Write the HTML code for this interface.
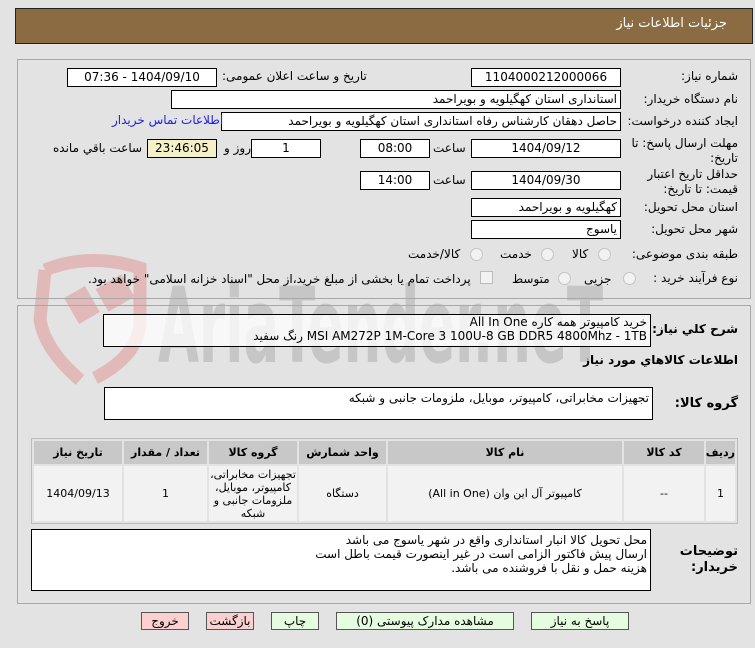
<!DOCTYPE html>
<html><head><meta charset="utf-8"><style>
*{margin:0;padding:0;box-sizing:border-box}
body{width:755px;height:648px;background:#e3e3e3;font-family:"DejaVu Sans","Liberation Sans",sans-serif;font-size:12px;color:#000;position:relative;overflow:hidden}
.a{position:absolute;white-space:nowrap}
.hdr{left:15px;top:8px;width:738px;height:36px;background:#8b6b42;border:1px solid #222}
.panel{position:absolute;left:17px;width:734px;border:1px solid #a8a8a8;background:#e3e3e3}
.box{position:absolute;background:#fff;border:1px solid #000;height:19px;font-size:12px;line-height:17px;padding:0 3px;direction:rtl;white-space:nowrap;overflow:hidden}
.c{text-align:center}
.lb{position:absolute;right:17px;direction:rtl;text-align:right;font-size:12px;white-space:nowrap}
.r{position:absolute;width:13px;height:13px;border-radius:50%;border:1px solid #c4c4c4;background:#f2f2f2}
.btn{position:absolute;top:612px;height:18px;border:1px solid #555;font-size:12px;line-height:16px;text-align:center;direction:rtl}
table{position:absolute;left:31px;top:438px;width:707px;border:1px solid #bbb;background:#e3e3e3;border-spacing:2px;direction:rtl;table-layout:fixed}
th{background:#c8c8c8;height:23px;font-size:11px;font-weight:bold;white-space:nowrap;overflow:hidden}
td{background:#f2f2f2;height:55px;text-align:center;font-size:11px;line-height:13px}
</style></head><body>
<svg class="a" style="left:0;top:250px" width="640" height="150">
<path d="M45 20 Q90 2 140 18 L140 70 Q140 105 95 128" fill="none" stroke="#e2b9b9" stroke-width="13"/>
<path d="M45 20 L40 70 Q45 100 80 130" fill="none" stroke="#e2b9b9" stroke-width="13"/>
<rect x="70" y="40" width="24" height="30" fill="#e2b9b9" transform="rotate(-30 82 55)"/>
<rect x="100" y="30" width="30" height="26" fill="#e2b9b9" transform="rotate(-30 115 43)"/>
<text x="158" y="112" font-family="DejaVu Sans Condensed,DejaVu Sans" font-weight="bold" font-size="104" fill="#c6c6c6" textLength="445" lengthAdjust="spacingAndGlyphs">AriaTender.neT</text>
</svg>
<div class="a hdr"></div>
<div class="a" style="right:28px;top:16px;color:#fff;font-size:13px;direction:rtl">جزئیات اطلاعات نیاز</div>

<div class="panel" style="top:59px;height:240px;background:transparent"></div>
<div class="panel" style="top:305px;height:299px;background:transparent"></div>

<div class="lb" style="top:69px">شماره نیاز:</div>
<div class="box c" style="left:471px;top:68px;width:150px">1104000212000066</div>
<div class="a" style="left:222px;top:69px;direction:rtl">تاریخ و ساعت اعلان عمومی:</div>
<div class="box c" style="left:67px;top:68px;width:150px">1404/09/10 - 07:36</div>

<div class="lb" style="top:92px">نام دستگاه خریدار:</div>
<div class="box" style="left:171px;top:90px;width:450px">استانداری استان کهگیلویه و بویراحمد</div>

<div class="lb" style="top:114px">ایجاد کننده درخواست:</div>
<div class="box" style="left:221px;top:112px;width:400px">حاصل دهقان کارشناس رفاه استانداری استان کهگیلویه و بویراحمد</div>
<div class="a" style="left:112px;top:113px;color:#2020e0;direction:rtl">اطلاعات تماس خریدار</div>

<div class="lb" style="top:136px;line-height:15px">مهلت ارسال پاسخ: تا<br>تاریخ:</div>
<div class="box c" style="left:471px;top:139px;width:150px">1404/09/12</div>
<div class="a" style="left:433px;top:141px">ساعت</div>
<div class="box c" style="left:360px;top:139px;width:70px">08:00</div>
<div class="box c" style="left:251px;top:139px;width:70px">1</div>
<div class="a" style="left:224px;top:141px">روز و</div>
<div class="box c" style="left:147px;top:139px;width:70px;background:#f4f0c8">23:46:05</div>
<div class="a" style="left:53px;top:141px">ساعت باقي مانده</div>

<div class="lb" style="top:167px;line-height:15px">حداقل تاریخ اعتبار<br>قیمت: تا تاریخ:</div>
<div class="box c" style="left:471px;top:171px;width:150px">1404/09/30</div>
<div class="a" style="left:433px;top:173px">ساعت</div>
<div class="box c" style="left:360px;top:171px;width:70px">14:00</div>

<div class="lb" style="top:200px">استان محل تحویل:</div>
<div class="box" style="left:471px;top:198px;width:150px">کهگیلویه و بویراحمد</div>
<div class="lb" style="top:222px">شهر محل تحویل:</div>
<div class="box" style="left:471px;top:220px;width:150px">یاسوج</div>

<div class="lb" style="top:247px">طبقه بندی موضوعی:</div>
<div class="r" style="left:598px;top:248px"></div><div class="a" style="left:572px;top:247px">کالا</div>
<div class="r" style="left:541px;top:248px"></div><div class="a" style="left:500px;top:247px">خدمت</div>
<div class="r" style="left:470px;top:248px"></div><div class="a" style="left:408px;top:247px">کالا/خدمت</div>

<div class="lb" style="top:271px">نوع فرآیند خرید :</div>
<div class="r" style="left:623px;top:272px"></div><div class="a" style="left:584px;top:272px">جزیی</div>
<div class="r" style="left:558px;top:272px"></div><div class="a" style="left:512px;top:272px">متوسط</div>
<div class="a" style="left:480px;top:271px;width:13px;height:13px;border:1px solid #bbb;background:#f2f2f2"></div>
<div class="a" style="left:88px;top:272px;direction:rtl">پرداخت تمام یا بخشی از مبلغ خرید،از محل "اسناد خزانه اسلامی" خواهد بود.</div>

<div class="lb" style="top:322px;font-weight:bold;font-size:12px">شرح کلي نياز:</div>
<div class="box" style="left:103px;top:314px;width:548px;height:33px;line-height:14px;background:rgba(255,255,255,.75)">خرید کامپیوتر همه کاره All In One<br>MSI AM272P 1M-Core 3 100U-8 GB DDR5 4800Mhz - 1TB رنگ سفید</div>
<div class="lb" style="top:353px;font-weight:bold">اطلاعات کالاهاي مورد نياز</div>
<div class="lb" style="top:396px;font-weight:bold;font-size:13px">گروه کالا:</div>
<div class="box" style="left:104px;top:387px;width:549px;height:33px;padding-top:2px">تجهیزات مخابراتی، کامپیوتر، موبایل، ملزومات جانبی و شبکه</div>

<table>
<tr><th style="width:29px">ردیف</th><th style="width:80px">کد کالا</th><th style="width:234px">نام کالا</th><th style="width:87px">واحد شمارش</th><th style="width:88px">گروه کالا</th><th style="width:83px">تعداد / مقدار</th><th>تاریخ نیاز</th></tr>
<tr><td>1</td><td>--</td><td>کامپیوتر آل این وان (All in One)</td><td>دستگاه</td><td>تجهیزات مخابراتی، کامپیوتر، موبایل، ملزومات جانبی و شبکه</td><td>1</td><td>1404/09/13</td></tr>
</table>

<div class="lb" style="top:544px;font-weight:bold;font-size:13px;line-height:16px">توضیحات<br>خریدار:</div>
<div class="box" style="left:31px;top:529px;width:620px;height:62px;line-height:14px;padding-top:3px">محل تحویل کالا انبار استانداری واقع در شهر یاسوج می باشد<br>ارسال پیش فاکتور  الزامی است در غیر اینصورت قیمت باطل است<br>هزینه حمل و نقل با فروشنده می باشد.</div>

<div class="btn" style="left:531px;width:98px;background:#e6fce0">پاسخ به نیاز</div>
<div class="btn" style="left:336px;width:178px;background:#e6fce0">مشاهده مدارک پیوستی (0)</div>
<div class="btn" style="left:271px;width:48px;background:#e6fce0">چاپ</div>
<div class="btn" style="left:206px;width:48px;background:#fcd0d0">بازگشت</div>
<div class="btn" style="left:141px;width:48px;background:#fcd0d0">خروج</div>
</body></html>
